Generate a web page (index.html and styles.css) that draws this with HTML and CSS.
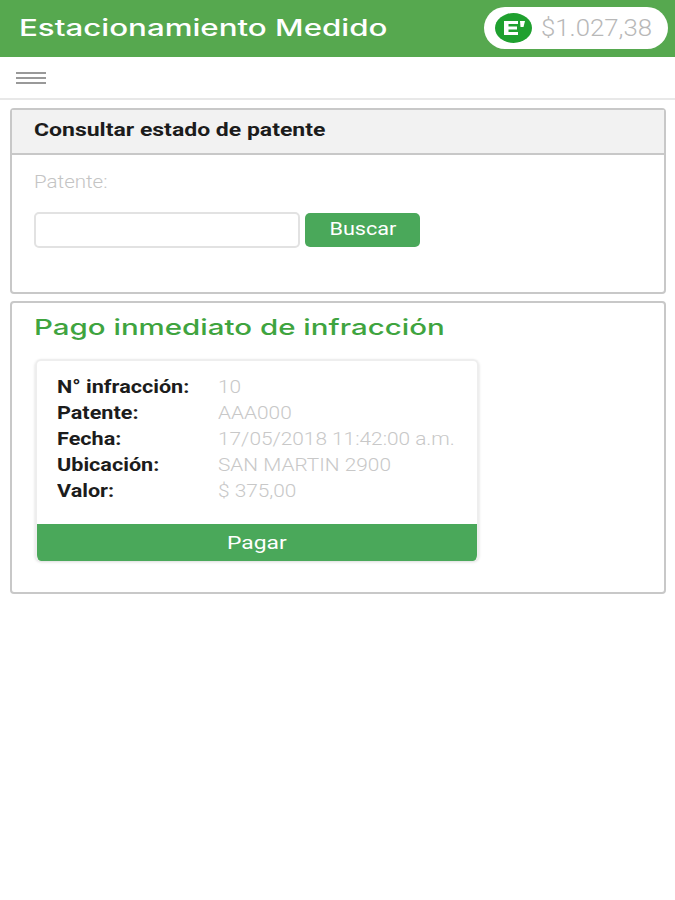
FILE: index.html
```html
<!DOCTYPE html>
<html lang="es">
  <head>
    <meta charset="UTF-8" />
    <meta name="viewport" content="width=device-width, initial-scale=1.0" />
    <title>Estacionamiento Medido</title>
    <link rel="stylesheet" href="styles.css">
  </head>
  <body>
    <header class="topbar">
      <h1 class="app-title">Estacionamiento Medido</h1>
      <div class="balance">
        <svg class="balance-logo" width="37" height="30" viewBox="0 0 37 30">
          <ellipse cx="18.500" cy="15" rx="18.500" ry="15" fill="#1fa02f" />
          <path d="M9 8h14v3h-9.500v2.500h8.500v3h-8.500v2.500h9.500v3h-14z" fill="#fff" />
          <path d="M25 8h5l-1.500 6h-3z" fill="#fff" />
        </svg>
        <span class="balance-value">$1.027,38</span>
      </div>
    </header>
    <nav class="menubar">
      <div class="burger"><span></span><span></span><span></span></div>
    </nav>
    <main class="content">
      <section class="panel">
        <h2 class="panel-head"><span class="panel-head-text">Consultar estado de patente</span></h2>
        <div class="panel-body">
          <label class="field-label" for="patente">Patente:</label>
          <div class="search-row">
            <input class="inp" type="text" id="patente" />
            <button class="btn-search" type="button"><span class="btn-text">Buscar</span></button>
          </div>
        </div>
      </section>
      <section class="panel panel-pay">
        <h2 class="pay-title">Pago inmediato de infracción</h2>
        <div class="ticket">
          <dl class="ticket-data">
            <dt>N° infracción:</dt>
            <dd>10</dd>
            <dt>Patente:</dt>
            <dd>AAA000</dd>
            <dt>Fecha:</dt>
            <dd>17/05/2018 11:42:00 a.m.</dd>
            <dt>Ubicación:</dt>
            <dd>SAN MARTIN 2900</dd>
            <dt>Valor:</dt>
            <dd>$ 375,00</dd>
          </dl>
          <button class="btn-pay" type="button"><span class="btn-text">Pagar</span></button>
        </div>
      </section>
    </main>
  </body>
</html>
```

FILE: styles.css
```css
* {
  padding: 0;
  margin: 0;
  box-sizing: border-box;
}
body {
  background-color: #fff;
  color: #1c1c1c;
  font-family: Roboto, "Liberation Sans", sans-serif;
}
.topbar {
  height: 57px;
  display: flex;
  align-items: center;
  justify-content: space-between;
  padding: 0 7px 1px 19px;
  background-color: #56a84f;
}
.app-title {
  color: #fff;
  font-family: Inter, "Open Sans", sans-serif;
  font-size: 23px;
  font-weight: 500;
  white-space: nowrap;
  transform: scaleX(1.36);
  transform-origin: left center;
}
.balance {
  width: 184px;
  height: 42px;
  display: flex;
  align-items: center;
  gap: 9px;
  padding-left: 11px;
  background-color: #fff;
  border-radius: 21px;
}
.balance-value {
  display: inline-block;
  color: #b8b8b8;
  font-size: 23px;
  font-weight: 300;
  transform: scaleX(1.12);
  transform-origin: left center;
}
.menubar {
  height: 43px;
  display: flex;
  align-items: center;
  padding-left: 16px;
  border-bottom: 2px solid #e8e8e8;
}
.burger {
  width: 30px;
  display: flex;
  flex-direction: column;
  gap: 3px;
}
.burger span {
  height: 2px;
  background-color: #999;
}
.content {
  display: flex;
  flex-direction: column;
  gap: 7px;
  padding: 8px 9px 0 10px;
}
.panel {
  border: 2px solid #c8c8c8;
  border-radius: 4px;
}
.panel-head {
  height: 45px;
  display: flex;
  align-items: center;
  padding: 0 0 4px 22px;
  background-color: #f2f2f2;
  border-bottom: 2px solid #c8c8c8;
  font-size: 19px;
  font-weight: 700;
}
.panel-head-text {
  display: inline-block;
  transform: scaleX(1.21);
  transform-origin: left center;
  white-space: nowrap;
}
.panel-body {
  height: 137px;
  padding: 16px 22px 0;
}
.field-label {
  display: block;
  width: fit-content;
  color: #c4c4c4;
  font-size: 18px;
  font-weight: 300;
  transform: scaleX(1.14);
  transform-origin: left center;
}
.search-row {
  display: flex;
  align-items: center;
  gap: 5px;
  margin-top: 20px;
}
.inp {
  width: 266px;
  height: 36px;
  background: #fff;
  border: 2px solid #e2e2e2;
  border-radius: 5px;
}
.btn-search {
  width: 115px;
  height: 34px;
  padding-bottom: 3px;
  background-color: #4aa85a;
  border: none;
  border-radius: 5px;
  color: #fff;
  font-family: Roboto, sans-serif;
  font-size: 18px;
}
.btn-text {
  display: inline-block;
  transform: scaleX(1.2);
}
.panel-pay {
  height: 293px;
  padding: 0 22px;
}
.pay-title {
  width: fit-content;
  margin-top: 11px;
  color: #3fa43f;
  font-family: Inter, "Open Sans", sans-serif;
  font-size: 22px;
  font-weight: 500;
  white-space: nowrap;
  transform: scaleX(1.34);
  transform-origin: left center;
}
.ticket {
  width: 444px;
  margin: 19px 0 0 1px;
  border: 2px solid #eee;
  border-bottom: none;
  border-radius: 6px;
  overflow: hidden;
  box-shadow: 0 1px 3px rgba(0, 0, 0, 0.15);
}
.ticket-data {
  height: 163px;
  display: grid;
  grid-template-columns: 161px 1fr;
  grid-auto-rows: 26px;
  align-content: start;
  align-items: center;
  justify-items: start;
  padding: 12px 0 0 20px;
  font-size: 18px;
}
.ticket-data dt {
  font-weight: 700;
  transform: scaleX(1.2);
  transform-origin: left center;
  white-space: nowrap;
}
.ticket-data dd {
  color: #c8c8c8;
  font-weight: 300;
  transform: scaleX(1.157);
  transform-origin: left center;
  white-space: nowrap;
}
.btn-pay {
  display: block;
  width: 100%;
  height: 37px;
  background-color: #4aa85a;
  border: none;
  color: #fff;
  font-family: Roboto, sans-serif;
  font-size: 19px;
}
```
